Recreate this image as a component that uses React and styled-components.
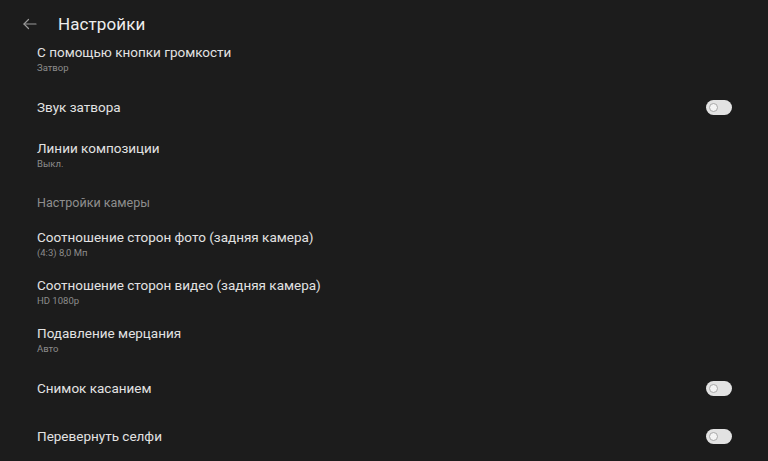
import React from 'react';
import styled, { createGlobalStyle } from 'styled-components';

const GlobalStyle = createGlobalStyle`
  html, body {
    margin: 0;
    padding: 0;
    background: #1c1c1c;
  }
  body {
    font-family: Roboto, "Noto Sans", sans-serif;
  }
`;

const rows = [
  { type: 'item', title: 'С помощью кнопки громкости', summary: 'Затвор' },
  { type: 'toggle', title: 'Звук затвора' },
  { type: 'item', title: 'Линии композиции', summary: 'Выкл.' },
  { type: 'section', title: 'Настройки камеры' },
  { type: 'item', title: 'Соотношение сторон фото (задняя камера)', summary: '(4:3) 8,0 Мп' },
  { type: 'item', title: 'Соотношение сторон видео (задняя камера)', summary: 'HD 1080p' },
  { type: 'item', title: 'Подавление мерцания', summary: 'Авто' },
  { type: 'toggle', title: 'Снимок касанием' },
  { type: 'toggle', title: 'Перевернуть селфи' },
];

const BackArrow = () => (
  <svg width="18" height="18" viewBox="0 0 24 24" fill="none" stroke="#9a9a9a" strokeWidth="1.6" strokeLinecap="round" strokeLinejoin="round">
    <path d="M20 12H4" />
    <path d="M10 6l-6 6 6 6" />
  </svg>
);

const App = () => {
  return (
    <Page>
      <GlobalStyle />
      <Toolbar>
        <BackButton><BackArrow /></BackButton>
        <Title>Настройки</Title>
      </Toolbar>
      <List>
        {rows.map((row, i) => {
          if (row.type === 'section') {
            return <SectionHeader key={i}>{row.title}</SectionHeader>;
          }
          return (
            <Row key={i}>
              <Texts>
                <RowTitle>{row.title}</RowTitle>
                {row.summary && <Summary>{row.summary}</Summary>}
              </Texts>
              {row.type === 'toggle' && (
                <Switch>
                  <Thumb />
                </Switch>
              )}
            </Row>
          );
        })}
      </List>
    </Page>
  );
};

const Page = styled.div`
  width: 768px;
  height: 461px;
  overflow: hidden;
  background: #1c1c1c;
  display: flex;
  flex-direction: column;
`;

const Toolbar = styled.div`
  height: 38px;
  flex-shrink: 0;
  display: flex;
  align-items: center;
  padding-top: 9px;
  box-sizing: border-box;
`;

const BackButton = styled.div`
  width: 18px;
  height: 18px;
  margin-left: 21px;
  display: flex;
  align-items: center;
  justify-content: center;
`;

const Title = styled.h1`
  margin: 0 0 0 19px;
  font-size: 17px;
  font-weight: 400;
  color: #ededed;
  letter-spacing: 0.1px;
`;

const List = styled.div`
  display: flex;
  flex-direction: column;
  margin-top: -3px;
`;

const Row = styled.div`
  height: 48px;
  display: flex;
  align-items: center;
  padding: 0 37px;
  box-sizing: border-box;
`;

const Texts = styled.div`
  flex: 1;
  display: flex;
  flex-direction: column;
`;

const RowTitle = styled.div`
  font-size: 13.5px;
  color: #e2e2e2;
  line-height: 17px;
`;

const Summary = styled.div`
  font-size: 9.5px;
  color: #8c8c8c;
  line-height: 14px;
`;

const SectionHeader = styled.div`
  height: 41px;
  display: flex;
  align-items: center;
  padding: 5px 37px 0;
  box-sizing: border-box;
  font-size: 12.5px;
  color: #8e8e8e;
`;

const Switch = styled.div`
  width: 26px;
  height: 15px;
  border-radius: 8px;
  background: #e2e2e2;
  display: flex;
  align-items: center;
  padding-left: 3px;
  box-sizing: border-box;
  margin-right: -1px;
`;

const Thumb = styled.div`
  width: 7px;
  height: 7px;
  border-radius: 50%;
  border: 1.5px solid #a8a8a8;
  background: #f4f4f4;
`;

export default App;
